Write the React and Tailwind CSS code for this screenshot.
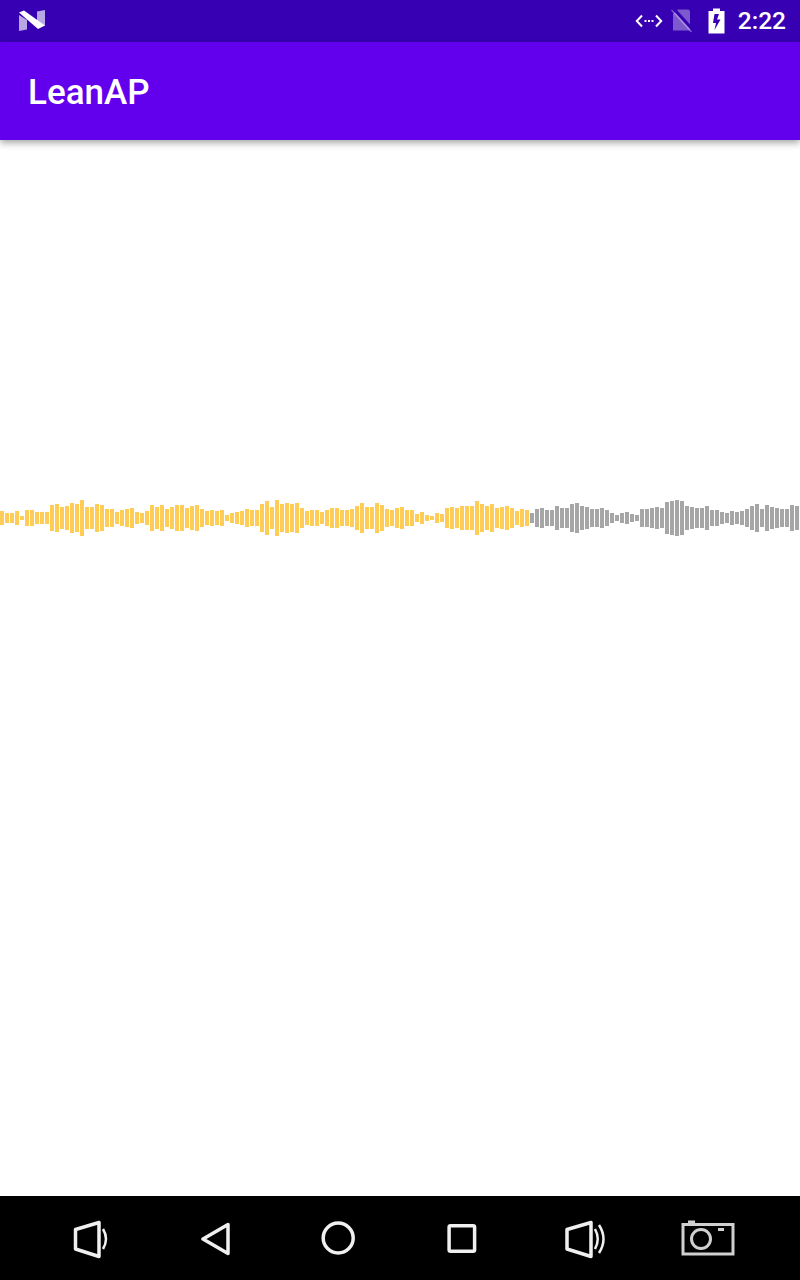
const played = [
  14, 10, 10, 14, 4, 16, 16, 12, 12, 12, 26, 28, 22, 24, 30, 28, 36, 22, 22, 28,
  26, 18, 18, 12, 16, 18, 20, 12, 10, 14, 26, 22, 26, 18, 22, 26, 26, 20, 24, 26,
  18, 14, 16, 14, 16, 6, 10, 12, 14, 18, 16, 16, 28, 34, 22, 36, 28, 30, 28, 30,
  20, 14, 16, 16, 12, 16, 20, 20, 16, 16, 18, 24, 30, 22, 22, 30, 26, 18, 16, 20,
  22, 16, 16, 8, 12, 6, 4, 10, 8, 20, 22, 20, 24, 24, 24, 34, 28, 24, 28, 20,
  22, 24, 20, 14, 18, 16,
]

const remaining = [
  10, 18, 20, 16, 16, 24, 20, 20, 28, 30, 24, 22, 18, 18, 20, 16, 10, 6, 10, 12,
  8, 6, 18, 18, 20, 22, 20, 32, 34, 36, 34, 24, 22, 20, 20, 24, 16, 16, 12, 10,
  14, 12, 14, 18, 24, 28, 18, 26, 22, 20, 18, 18, 26, 24,
]

const StatusBar = () => {
  return (
    <div className="h-[42px] bg-[#3700b3] flex items-center pl-[19px] pr-[14px]">
      <svg width="27" height="22" viewBox="0 0 27 22">
        <path d="M0 5 L8 10 V19.5 L0 21 Z" fill="#fff" fillOpacity="0.65" />
        <path d="M18 1.5 L26 0 V16 L18 11 Z" fill="#fff" fillOpacity="0.65" />
        <path d="M0 2.5 L5 0.5 L26 15.5 L19 19 Z" fill="#fff" />
      </svg>
      <div className="ml-auto flex items-center">
        <svg width="28" height="14" viewBox="0 0 28 14" fill="none">
          <path d="M7 1.5 L1.8 7 L7 12.5 M21 1.5 L26.2 7 L21 12.5" stroke="#fff" strokeWidth="2" />
          <rect x="9.5" y="6" width="2" height="2" fill="#fff" />
          <rect x="13" y="6" width="2" height="2" fill="#fff" />
          <rect x="16.5" y="6" width="2" height="2" fill="#fff" />
        </svg>
        <svg className="ml-[8px]" width="22" height="24" viewBox="0 0 22 24" fill="none">
          <path d="M2 5 L7 0.5 H17 A2 2 0 0 1 19 2.5 V21.5 H2 Z" fill="#fff" fillOpacity="0.35" />
          <path d="M3 0 L23 22" stroke="#3700b3" strokeWidth="3" />
          <path d="M0.5 1 L20.5 23" stroke="#fff" strokeOpacity="0.35" strokeWidth="1.5" />
        </svg>
        <svg className="ml-[15px]" width="17" height="26" viewBox="0 0 17 26">
          <path
            d="M5 0.5 H12 V3 H16.5 V25.5 H0.5 V3 H5 Z M6.5 6 L5 15 H8 L6.5 22 L12.5 11.5 H9 L11 6 Z"
            fill="#fff"
            fillRule="evenodd"
          />
        </svg>
        <span className="ml-[13px] text-white text-[24.5px] font-medium font-['Roboto',sans-serif] leading-none">
          2:22
        </span>
      </div>
    </div>
  )
}

const AppBar = () => {
  return (
    <div className="relative h-[98px] bg-[#6200ee] flex items-center px-[28px] pt-[5px] shadow-[0_3px_7px_rgba(0,0,0,0.35)]">
      <h1 className="text-white text-[35px] font-medium font-['Roboto',sans-serif]">
        LeanAP
      </h1>
    </div>
  )
}

const Waveform = () => {
  return (
    <div className="mt-[360px] h-[36px] flex items-center gap-[1px] overflow-hidden">
      {played.map((h, i) => (
        <div key={`p-${i}`} className="w-[4px] shrink-0 bg-[#ffcc55]" style={{ height: h }} />
      ))}
      {remaining.map((h, i) => (
        <div key={`r-${i}`} className="w-[4px] shrink-0 bg-[#a6a6a6]" style={{ height: h }} />
      ))}
    </div>
  )
}

const navStroke = '#f0f0f0'

const NavBar = () => {
  return (
    <div className="h-[84px] bg-black grid grid-cols-6 items-center justify-items-center pl-[28px] pr-[30px]">
      <svg className="blur-[0.5px]" width="44" height="44" viewBox="0 0 44 44" fill="none" stroke={navStroke}>
        <path d="M7.5 13.5 L31 6.5 V40.5 L7.5 33 Z" strokeWidth="3.5" strokeLinejoin="round" />
        <path d="M35 13 Q41 23 35 33" strokeWidth="2.5" />
      </svg>
      <svg className="blur-[0.5px]" width="44" height="44" viewBox="0 0 44 44" fill="none" stroke={navStroke}>
        <path d="M12 23 L37 8.5 V37.5 Z" strokeWidth="3.5" strokeLinejoin="round" />
      </svg>
      <svg className="blur-[0.5px]" width="44" height="44" viewBox="0 0 44 44" fill="none" stroke={navStroke}>
        <circle cx="23.2" cy="22" r="15" strokeWidth="3.5" />
      </svg>
      <svg className="blur-[0.5px]" width="44" height="44" viewBox="0 0 44 44" fill="none" stroke={navStroke}>
        <rect x="10.1" y="9.75" width="25.5" height="25.5" rx="1.5" strokeWidth="3.5" />
      </svg>
      <svg className="blur-[0.5px]" width="44" height="44" viewBox="0 0 44 44" fill="none" stroke={navStroke}>
        <path d="M5 13.5 L29 6.5 V40.5 L5 33 Z" strokeWidth="3.5" strokeLinejoin="round" />
        <path d="M33 13 Q38.5 23 33 33" strokeWidth="2.5" />
        <path d="M37 9 Q46 23 37 37" strokeWidth="2.5" />
      </svg>
      <svg className="blur-[0.5px]" width="56" height="44" viewBox="0 0 56 44" fill="none" stroke="#d0d0d0">
        <path d="M3 8.5 H53 V38 H3 Z" strokeWidth="3" />
        <path d="M8 6 H15" strokeWidth="3" />
        <circle cx="21" cy="23" r="9.5" strokeWidth="3" />
        <rect x="38" y="12" width="6" height="3" fill="#d0d0d0" stroke="none" />
      </svg>
    </div>
  )
}

export default function App() {
  return (
    <div className="w-[800px] h-[1280px] bg-white flex flex-col overflow-hidden">
      <StatusBar />
      <AppBar />
      <main className="flex-1">
        <Waveform />
      </main>
      <NavBar />
    </div>
  )
}
